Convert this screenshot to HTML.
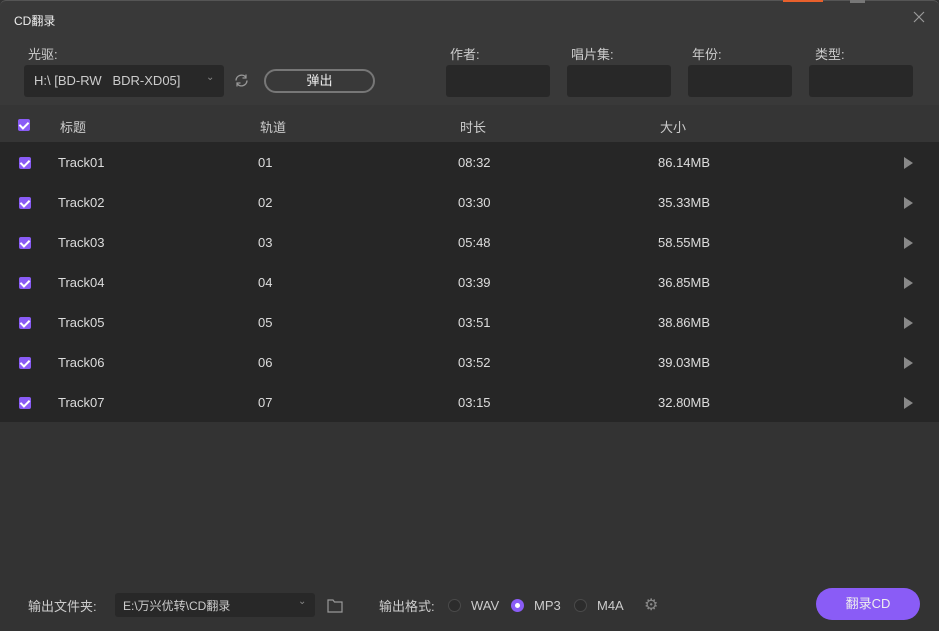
<!DOCTYPE html>
<html><head><meta charset="utf-8"><style>
*{margin:0;padding:0;box-sizing:border-box}
body{width:939px;height:631px;background:#333;font-family:"Liberation Sans","Noto Sans CJK SC",sans-serif;color:#ddd;font-size:13px;position:relative;overflow:hidden}
.top{position:absolute;left:0;top:0;width:939px;height:105px;background:#393939;border-top:1px solid #555;border-radius:6px 6px 0 0}
.a{position:absolute;white-space:nowrap}
.box{position:absolute;background:#282828;border-radius:3px}
.thead{position:absolute;left:0;top:105px;width:939px;height:37px;background:#353535}
.rows{position:absolute;left:0;top:142px;width:939px;height:280px;background:#262626}
.cb{position:absolute;width:12px;height:12px;background:#8a5cf6;border-radius:2px}
.cb:after{content:"";position:absolute;left:3px;top:1px;width:4px;height:7px;border:solid #fff;border-width:0 2px 2px 0;transform:rotate(45deg)}
.play{position:absolute;width:0;height:0;border-left:9px solid #888;border-top:6px solid transparent;border-bottom:6px solid transparent}
.radio{position:absolute;width:13px;height:13px;border-radius:50%;border:1px solid #4a4a4a;background:#2c2c2c}
</style></head><body>
<div class="top"></div>
<div class="a" style="left:783px;top:0;width:40px;height:2px;background:#e8602c"></div>
<div class="a" style="left:850px;top:0;width:15px;height:3px;background:#777"></div>
<div class="a" style="left:14px;top:12px;font-size:12px;color:#eee">CD翻录</div>
<svg class="a" style="left:913px;top:11px" width="12" height="12" viewBox="0 0 12 12"><path d="M1 1L11 11M11 1L1 11" stroke="#999" stroke-width="1.2"/></svg>
<div class="a" style="left:28px;top:44px;color:#ccc">光驱:</div>
<div class="box" style="left:24px;top:65px;width:200px;height:32px"></div>
<div class="a" style="left:34px;top:73px;color:#ccc">H:\ [BD-RW &nbsp; BDR-XD05]</div>
<div class="a" style="left:206px;top:72px;color:#888;font-size:10px">⌄</div>
<svg class="a" style="left:234px;top:73px" width="15" height="15" viewBox="0 0 15 15"><path d="M2 7.5A5.5 5.5 0 0 1 12 4.5M13 7.5A5.5 5.5 0 0 1 3 10.5" stroke="#999" stroke-width="1.4" fill="none"/><path d="M12 1.5v3.5h-3.5M3 13.5v-3.5h3.5" stroke="#999" stroke-width="1.2" fill="none"/></svg>
<div class="a" style="left:264px;top:69px;width:111px;height:24px;border:2px solid #777;border-radius:12px;text-align:center;line-height:20px;color:#eee;font-weight:normal">弹出</div>
<div class="a" style="left:450px;top:44px;color:#ccc">作者:</div>
<div class="a" style="left:571px;top:44px;color:#ccc">唱片集:</div>
<div class="a" style="left:692px;top:44px;color:#ccc">年份:</div>
<div class="a" style="left:815px;top:44px;color:#ccc">类型:</div>
<div class="box" style="left:446px;top:65px;width:104px;height:32px"></div>
<div class="box" style="left:567px;top:65px;width:104px;height:32px"></div>
<div class="box" style="left:688px;top:65px;width:104px;height:32px"></div>
<div class="box" style="left:809px;top:65px;width:104px;height:32px"></div>
<div class="thead"></div>
<div class="cb" style="left:18px;top:119px"></div>
<div class="a" style="left:60px;top:117px;color:#ccc">标题</div>
<div class="a" style="left:260px;top:117px;color:#ccc">轨道</div>
<div class="a" style="left:460px;top:117px;color:#ccc">时长</div>
<div class="a" style="left:660px;top:117px;color:#ccc">大小</div>
<div class="rows"></div>
<div id="r"></div>
<script>
var d=[["01","08:32","86.14MB"],["02","03:30","35.33MB"],["03","05:48","58.55MB"],["04","03:39","36.85MB"],["05","03:51","38.86MB"],["06","03:52","39.03MB"],["07","03:15","32.80MB"]];
var h="";d.forEach(function(x,i){var y=142+i*40;
h+='<div class="cb" style="left:19px;top:'+(y+15)+'px"></div><div class="a" style="left:58px;top:'+(y+13)+'px">Track'+x[0]+'</div><div class="a" style="left:258px;top:'+(y+13)+'px">'+x[0]+'</div><div class="a" style="left:458px;top:'+(y+13)+'px">'+x[1]+'</div><div class="a" style="left:658px;top:'+(y+13)+'px">'+x[2]+'</div><div class="play" style="left:904px;top:'+(y+15)+'px"></div>';});
document.getElementById("r").innerHTML=h;
</script>
<div class="a" style="left:28px;top:596px;color:#ccc">输出文件夹:</div>
<div class="box" style="left:115px;top:593px;width:200px;height:24px"></div>
<div class="a" style="left:123px;top:597px;color:#ccc;font-size:12px">E:\万兴优转\CD翻录</div>
<div class="a" style="left:298px;top:596px;color:#888;font-size:10px">⌄</div>
<svg class="a" style="left:327px;top:599px" width="16" height="14" viewBox="0 0 16 14"><path d="M1 1h5l1.5 2H15v10H1z" stroke="#999" stroke-width="1.2" fill="none"/></svg>
<div class="a" style="left:379px;top:596px;color:#ccc">输出格式:</div>
<div class="radio" style="left:448px;top:599px"></div>
<div class="a" style="left:471px;top:598px;color:#ccc">WAV</div>
<div class="radio" style="left:511px;top:599px;background:#8a5cf6;border-color:#8a5cf6"><div style="position:absolute;left:3px;top:3px;width:5px;height:5px;border-radius:50%;background:#fff"></div></div>
<div class="a" style="left:534px;top:598px;color:#ccc">MP3</div>
<div class="radio" style="left:574px;top:599px"></div>
<div class="a" style="left:597px;top:598px;color:#ccc">M4A</div>
<div class="a" style="left:644px;top:595px;color:#888;font-size:16px">⚙</div>
<div class="a" style="left:816px;top:588px;width:104px;height:32px;background:#8a5cf6;border-radius:16px;text-align:center;line-height:32px;color:#eee">翻录CD</div>
</body></html>
